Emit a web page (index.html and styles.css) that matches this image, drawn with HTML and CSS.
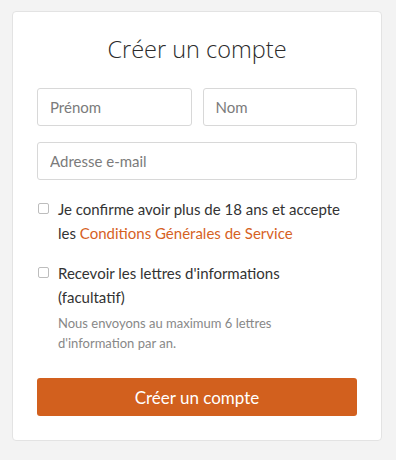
FILE: index.html
```html
<!DOCTYPE html>
<html lang="fr">
<head>
<meta charset="utf-8">
<link rel="stylesheet" href="styles.css">
</head>
<body>
<div class="card">
  <h1 class="title">Créer un compte</h1>
  <div class="row">
    <input class="field" type="text" placeholder="Prénom">
    <input class="field" type="text" placeholder="Nom">
  </div>
  <input class="field full" type="email" placeholder="Adresse e-mail">
  <label class="check">
    <span class="box"></span>
    <span class="label">Je confirme avoir plus de 18 ans et accepte les <a class="link" href="#">Conditions Générales de Service</a></span>
  </label>
  <label class="check second">
    <span class="box"></span>
    <span class="label">Recevoir les lettres d'informations (facultatif)
      <span class="hint">Nous envoyons au maximum 6 lettres d'information par an.</span>
    </span>
  </label>
  <button class="submit" type="button">Créer un compte</button>
</div>
</body>
</html>
```
FILE: styles.css
```css
html, body {
  margin: 0;
  background: #f3f3f3;
}
body {
  padding: 11px 14px 0 12px;
  font-family: Lato, "Noto Sans", sans-serif;
  color: #333;
}
.card {
  box-sizing: border-box;
  width: 370px;
  background: #fff;
  border: 1px solid #e3e3e3;
  border-radius: 4px;
  padding: 0 24px 24px;
}
.title {
  margin: 0;
  padding-top: 21px;
  height: 55px;
  font-family: "Open Sans", sans-serif;
  font-size: 23.5px;
  line-height: 32px;
  font-weight: 300;
  text-align: center;
  color: #2b2b2b;
}
.row {
  display: flex;
  gap: 11px;
}
.field {
  box-sizing: border-box;
  height: 38px;
  border: 1px solid #d8d8d8;
  border-radius: 3px;
  padding: 0 12px;
  font-family: inherit;
  font-size: 15px;
  color: #333;
  width: 100%;
  min-width: 0;
  outline: none;
}
.field::placeholder {
  color: #7b7b7b;
}
.full {
  display: block;
  margin-top: 16px;
}
.check {
  display: flex;
  gap: 9px;
  margin-top: 17px;
  font-size: 15px;
  line-height: 24px;
  color: #333;
}
.check.second {
  margin-top: 16px;
}
.label {
  max-width: 288px;
}
.box {
  flex: none;
  box-sizing: border-box;
  width: 11px;
  height: 11px;
  margin-top: 6px;
  margin-left: 1px;
  border: 1px solid #bdbdbd;
  border-radius: 2px;
}
.link {
  color: #d6621f;
  text-decoration: none;
}
.hint {
  display: block;
  margin-top: 4px;
  font-size: 13px;
  line-height: 20px;
  color: #888;
}
.submit {
  display: block;
  width: 100%;
  height: 38px;
  margin-top: 25px;
  border: none;
  border-radius: 3px;
  background: #d2601e;
  color: #fff;
  font-family: inherit;
  font-size: 17px;
}
```
